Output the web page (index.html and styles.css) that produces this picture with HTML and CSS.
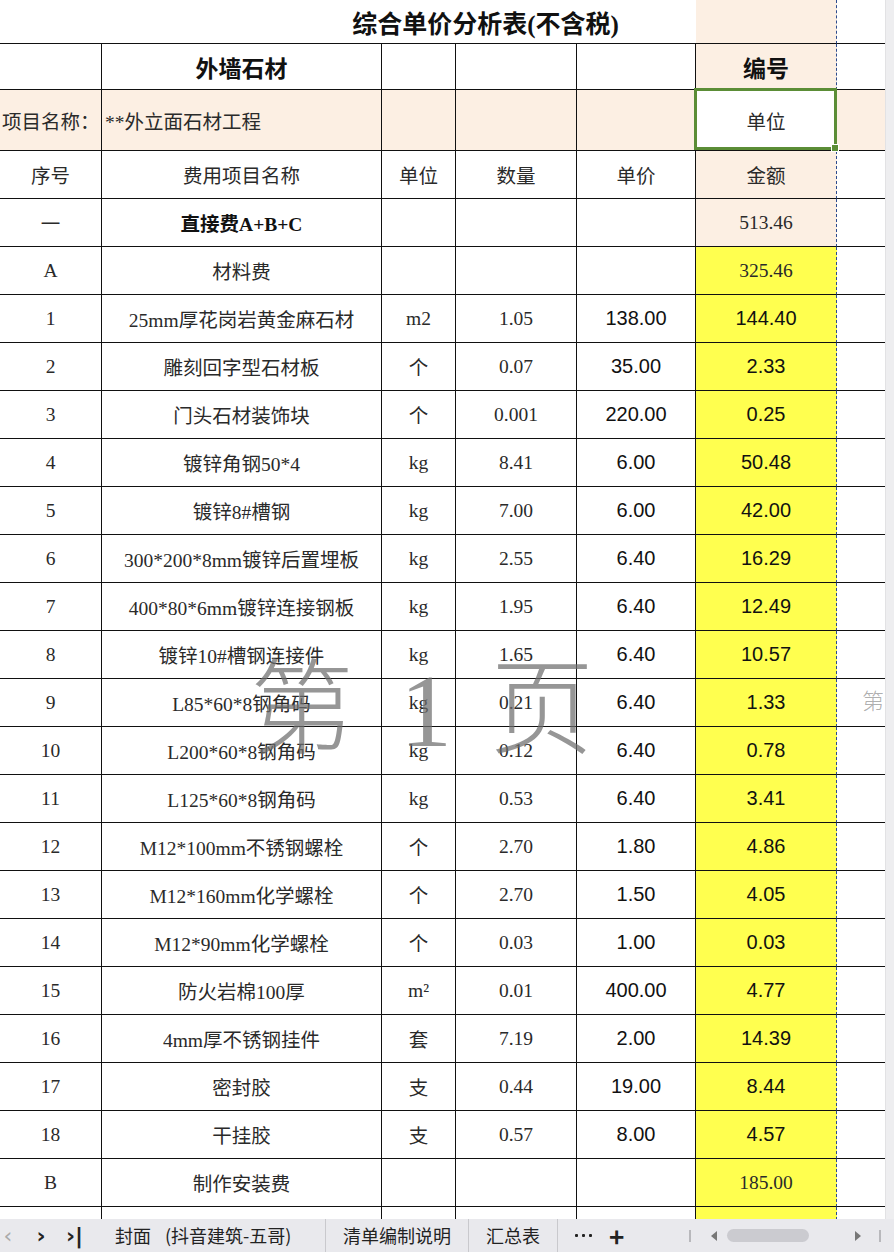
FILE: index.html
```html
<!DOCTYPE html>
<html lang="zh-CN">
<head>
<meta charset="utf-8">
<title>综合单价分析表</title>
<link rel="stylesheet" href="styles.css">
</head>
<body>
<div class="app">
  <div class="main">
    <div class="sheet">
      <div class="row r-title">
        <div class="c title-cell"><span class="title">综合单价分析表(不含税)</span></div>
        <div class="c f peach"></div>
        <div class="c g"></div>
      </div>
      <div class="row r-head2">
        <div class="c"></div>
        <div class="c big">外墙石材</div>
        <div class="c"></div>
        <div class="c"></div>
        <div class="c"></div>
        <div class="c f peach big">编号</div>
        <div class="c g"></div>
      </div>
      <div class="row r-proj peach-row">
        <div class="c left proj-label">项目名称：</div>
        <div class="c left proj-name">**外立面石材工程</div>
        <div class="c"></div>
        <div class="c"></div>
        <div class="c"></div>
        <div class="c f selected">单位<span class="sel-frame"></span></div>
        <div class="c g"></div>
      </div>
      <div class="row">
        <div class="c">序号</div>
        <div class="c">费用项目名称</div>
        <div class="c">单位</div>
        <div class="c">数量</div>
        <div class="c">单价</div>
        <div class="c f peach">金额</div>
        <div class="c g"></div>
      </div>
      <div class="row">
        <div class="c">一</div>
        <div class="c bold">直接费A+B+C</div>
        <div class="c"></div>
        <div class="c"></div>
        <div class="c"></div>
        <div class="c f peach">513.46</div>
        <div class="c g"></div>
      </div>
      <div class="row">
        <div class="c">A</div>
        <div class="c">材料费</div>
        <div class="c"></div>
        <div class="c"></div>
        <div class="c"></div>
        <div class="c f yellow">325.46</div>
        <div class="c g"></div>
      </div>
      <div class="row"><div class="c">1</div><div class="c">25mm厚花岗岩黄金麻石材</div><div class="c">m2</div><div class="c">1.05</div><div class="c num">138.00</div><div class="c f yellow num">144.40</div><div class="c g"></div></div>
      <div class="row"><div class="c">2</div><div class="c">雕刻回字型石材板</div><div class="c">个</div><div class="c">0.07</div><div class="c num">35.00</div><div class="c f yellow num">2.33</div><div class="c g"></div></div>
      <div class="row"><div class="c">3</div><div class="c">门头石材装饰块</div><div class="c">个</div><div class="c">0.001</div><div class="c num">220.00</div><div class="c f yellow num">0.25</div><div class="c g"></div></div>
      <div class="row"><div class="c">4</div><div class="c">镀锌角钢50*4</div><div class="c">kg</div><div class="c">8.41</div><div class="c num">6.00</div><div class="c f yellow num">50.48</div><div class="c g"></div></div>
      <div class="row"><div class="c">5</div><div class="c">镀锌8#槽钢</div><div class="c">kg</div><div class="c">7.00</div><div class="c num">6.00</div><div class="c f yellow num">42.00</div><div class="c g"></div></div>
      <div class="row"><div class="c">6</div><div class="c">300*200*8mm镀锌后置埋板</div><div class="c">kg</div><div class="c">2.55</div><div class="c num">6.40</div><div class="c f yellow num">16.29</div><div class="c g"></div></div>
      <div class="row"><div class="c">7</div><div class="c">400*80*6mm镀锌连接钢板</div><div class="c">kg</div><div class="c">1.95</div><div class="c num">6.40</div><div class="c f yellow num">12.49</div><div class="c g"></div></div>
      <div class="row"><div class="c">8</div><div class="c">镀锌10#槽钢连接件</div><div class="c">kg</div><div class="c">1.65</div><div class="c num">6.40</div><div class="c f yellow num">10.57</div><div class="c g"></div></div>
      <div class="row"><div class="c">9</div><div class="c">L85*60*8钢角码</div><div class="c">kg</div><div class="c">0.21</div><div class="c num">6.40</div><div class="c f yellow num">1.33</div><div class="c g"></div></div>
      <div class="row"><div class="c">10</div><div class="c">L200*60*8钢角码</div><div class="c">kg</div><div class="c">0.12</div><div class="c num">6.40</div><div class="c f yellow num">0.78</div><div class="c g"></div></div>
      <div class="row"><div class="c">11</div><div class="c">L125*60*8钢角码</div><div class="c">kg</div><div class="c">0.53</div><div class="c num">6.40</div><div class="c f yellow num">3.41</div><div class="c g"></div></div>
      <div class="row"><div class="c">12</div><div class="c">M12*100mm不锈钢螺栓</div><div class="c">个</div><div class="c">2.70</div><div class="c num">1.80</div><div class="c f yellow num">4.86</div><div class="c g"></div></div>
      <div class="row"><div class="c">13</div><div class="c">M12*160mm化学螺栓</div><div class="c">个</div><div class="c">2.70</div><div class="c num">1.50</div><div class="c f yellow num">4.05</div><div class="c g"></div></div>
      <div class="row"><div class="c">14</div><div class="c">M12*90mm化学螺栓</div><div class="c">个</div><div class="c">0.03</div><div class="c num">1.00</div><div class="c f yellow num">0.03</div><div class="c g"></div></div>
      <div class="row"><div class="c">15</div><div class="c">防火岩棉100厚</div><div class="c">m²</div><div class="c">0.01</div><div class="c num">400.00</div><div class="c f yellow num">4.77</div><div class="c g"></div></div>
      <div class="row"><div class="c">16</div><div class="c">4mm厚不锈钢挂件</div><div class="c">套</div><div class="c">7.19</div><div class="c num">2.00</div><div class="c f yellow num">14.39</div><div class="c g"></div></div>
      <div class="row"><div class="c">17</div><div class="c">密封胶</div><div class="c">支</div><div class="c">0.44</div><div class="c num">19.00</div><div class="c f yellow num">8.44</div><div class="c g"></div></div>
      <div class="row"><div class="c">18</div><div class="c">干挂胶</div><div class="c">支</div><div class="c">0.57</div><div class="c num">8.00</div><div class="c f yellow num">4.57</div><div class="c g"></div></div>
      <div class="row"><div class="c">B</div><div class="c">制作安装费</div><div class="c"></div><div class="c"></div><div class="c"></div><div class="c f yellow">185.00</div><div class="c g"></div></div>
      <div class="row"><div class="c"></div><div class="c"></div><div class="c"></div><div class="c"></div><div class="c"></div><div class="c f yellow"></div><div class="c g"></div></div>

      <div class="watermark">第<span class="wm-num">1</span>页</div>
      <div class="watermark-next">第</div>
    </div>
    <div class="vscroll"></div>
  </div>
  <div class="tabs">
    <div class="nav">
      <span class="nav-btn b1">&#8249;</span>
      <span class="nav-btn b2">&#8250;</span>
      <span class="nav-btn b3">&#8250;|</span>
    </div>
    <div class="tab tab-first">封面<span class="paren">(抖音建筑-五哥)</span></div>
    <div class="tab">清单编制说明</div>
    <div class="tab">汇总表</div>
    <div class="more"><span class="dot"></span><span class="dot"></span><span class="dot"></span></div>
    <div class="plus">+</div>
    <div class="hscroll">
      <span class="bar-mark"></span>
      <span class="tri tri-left"></span>
      <span class="thumb"></span>
      <span class="tri tri-right"></span>
      <span class="bar-mark"></span>
    </div>
  </div>
</div>
</body>
</html>
```
FILE: styles.css
```css
html, body {
  margin: 0;
  padding: 0;
  background: #fff;
}
body {
  width: 894px;
  height: 1252px;
  overflow: hidden;
  font-family: "Liberation Serif", "Noto Sans CJK SC", serif;
  color: #2a2a2a;
}
.app {
  display: flex;
  flex-direction: column;
  width: 894px;
  height: 1252px;
}
.main {
  display: flex;
  height: 1219px;
  overflow: hidden;
}
.sheet {
  position: relative;
  width: 886px;
  height: 1219px;
  overflow: hidden;
}
.vscroll {
  width: 8px;
  background: #eeeef0;
  border-left: 1px solid #e2e2e4;
}
.row {
  display: grid;
  grid-template-columns: 102px 280px 74px 121px 119px 141px 49px;
  height: 48px;
}
.c {
  box-sizing: border-box;
  border-right: 1px solid #111;
  border-bottom: 1px solid #111;
  display: flex;
  align-items: center;
  justify-content: center;
  font-size: 19.5px;
  white-space: nowrap;
  overflow: visible;
}
.c.f {
  border-right: 1px dashed #2d4c8f;
}
.c.g {
  border-right: none;
}
.peach {
  background: #fcefe3;
}
.yellow {
  background: #ffff4f;
}
.peach-row .c {
  background: #fcefe3;
}
.peach-row .c.selected {
  background: #fff;
}
.num {
  font-family: "Liberation Sans", "Noto Sans CJK SC", sans-serif;
  font-size: 20px;
  color: #111;
}
.bold {
  font-weight: bold;
  color: #111;
}
.r-title {
  height: 44px;
  grid-template-columns: 696px 141px 49px;
}
.title-cell {
  border-right: none;
  padding-left: 275px;
}
.title {
  font-weight: bold;
  font-size: 25px;
  color: #111;
}
.r-head2 {
  height: 46px;
}
.big {
  font-weight: bold;
  font-size: 23px;
  color: #111;
}
.r-proj {
  height: 61px;
}
.left {
  justify-content: flex-start;
}
.proj-label {
  padding-left: 2px;
}
.proj-name {
  padding-left: 3px;
}
.selected {
  position: relative;
}
.sel-frame {
  position: absolute;
  left: -2px;
  top: -2px;
  width: 143px;
  height: 62px;
  box-sizing: border-box;
  border: 3px solid #5b8d36;
}
.sel-frame::after {
  content: "";
  position: absolute;
  right: -5px;
  bottom: -5px;
  width: 6px;
  height: 6px;
  background: #5b8d36;
  border: 1px solid #fff;
}
.watermark {
  position: absolute;
  left: 250px;
  top: 636px;
  font-family: "Noto Sans CJK SC", sans-serif;
  font-weight: 300;
  font-size: 104px;
  line-height: 130px;
  color: rgba(110, 110, 110, 0.72);
  pointer-events: none;
  white-space: nowrap;
}
.wm-num {
  font-family: "Liberation Serif", serif;
  font-weight: normal;
  margin: 0 38px 0 46px;
}
.watermark-next {
  position: absolute;
  left: 862px;
  top: 683px;
  font-family: "Noto Sans CJK SC", sans-serif;
  font-weight: 300;
  font-size: 22px;
  color: rgba(130, 130, 130, 0.65);
}
.tabs {
  display: flex;
  align-items: center;
  height: 33px;
  background: #e9e9ed;
  font-family: "Noto Sans CJK SC", sans-serif;
  font-size: 18px;
  color: #222;
}
.nav {
  display: flex;
  align-items: center;
  width: 98px;
  flex: none;
}
.nav-btn {
  font-family: "DejaVu Sans", sans-serif;
  font-size: 22px;
  font-weight: bold;
  line-height: 33px;
  color: #222;
}
.nav-btn.b1 {
  width: 16px;
  text-align: center;
  color: #aaa;
  font-weight: normal;
}
.nav-btn.b2 {
  width: 50px;
  text-align: center;
}
.nav-btn.b3 {
  width: 32px;
  text-align: left;
}
.tab {
  padding: 0 17px;
  height: 33px;
  line-height: 33px;
  border-right: 1px solid #c9c9cd;
  flex: none;
}
.tab-first {
  box-sizing: border-box;
  width: 228px;
}
.paren {
  margin-left: 14px;
}
.more {
  display: flex;
  align-items: center;
  gap: 4px;
  padding: 0 17px 0 17px;
}
.dot {
  width: 3px;
  height: 3px;
  background: #222;
  border-radius: 1px;
}
.plus {
  font-size: 26px;
  font-weight: bold;
  line-height: 33px;
}
.hscroll {
  margin-left: auto;
  display: flex;
  align-items: center;
  width: 205px;
  height: 33px;
}
.bar-mark {
  width: 2px;
  height: 12px;
  background: #b8b8bc;
}
.hscroll .bar-mark:first-child {
  margin-right: 20px;
}
.hscroll .bar-mark:last-child {
  margin-left: 18px;
}
.tri {
  width: 0;
  height: 0;
  border-top: 5px solid transparent;
  border-bottom: 5px solid transparent;
}
.tri-left {
  border-right: 6px solid #777;
  margin-right: 10px;
}
.tri-right {
  border-left: 6px solid #777;
  margin-left: 46px;
}
.thumb {
  width: 82px;
  height: 13px;
  border-radius: 7px;
  background: #cbcbd0;
}
```
